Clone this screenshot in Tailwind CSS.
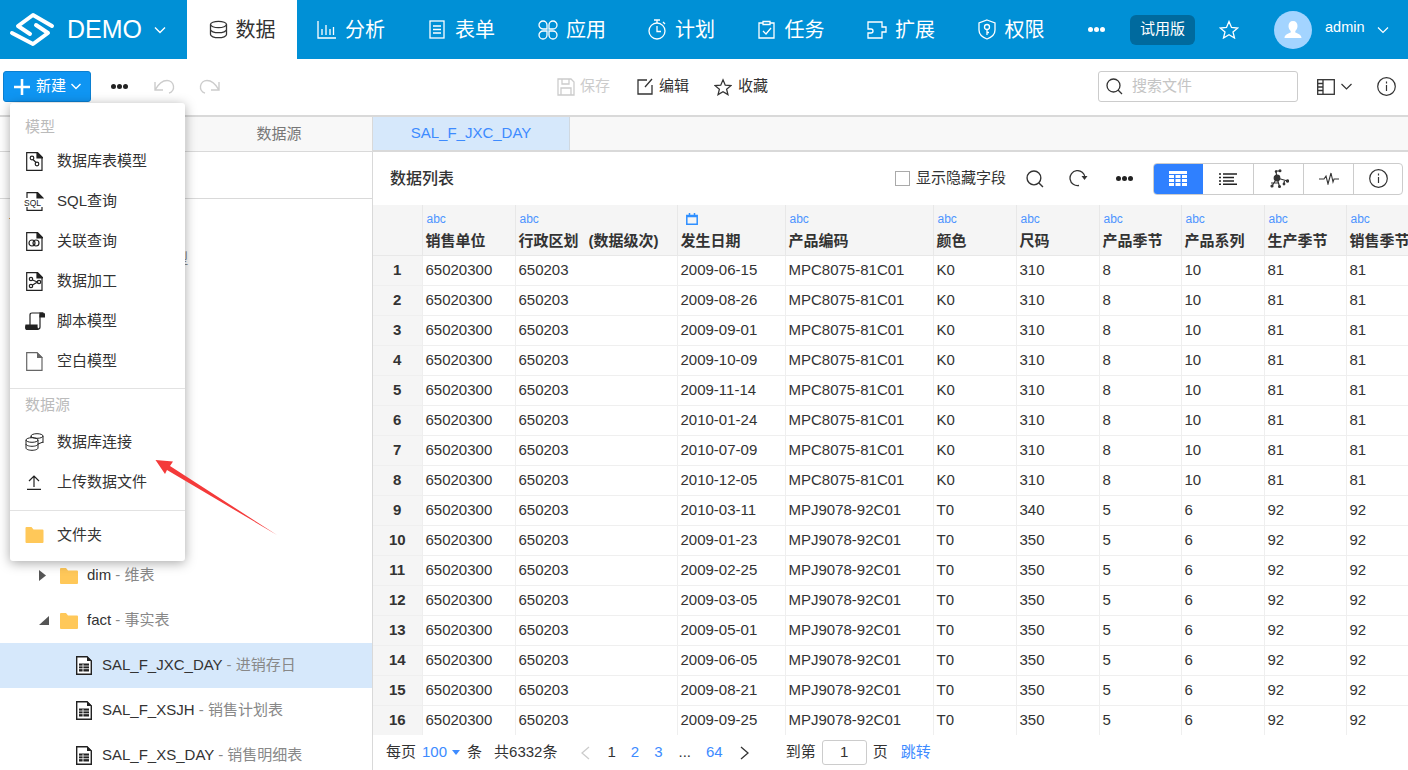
<!DOCTYPE html>
<html lang="zh">
<head>
  <meta charset="UTF-8">
  <title>数据</title>
  <script src="https://cdn.jsdelivr.net/npm/@tailwindcss/browser@4"></script>
</head>
<body class="w-[1408px] h-[770px] overflow-hidden relative bg-white text-[#333] text-[15px] font-['Liberation_Sans','Noto_Sans_CJK_SC',sans-serif]">

  <!-- Top nav -->
  <header class="h-[59px] bg-[#0090d6] flex items-center text-white">
    <div class="w-[187px] h-full flex items-center">
      <svg class="ml-[9px] w-[46px] h-[59px]" viewBox="9 0 46 59" fill="none" stroke="#fff" stroke-width="4" stroke-linejoin="round" stroke-linecap="round">
        <path d="M52 26 33 15 18 26 30 34"/>
        <path d="M12 33 33 44 48 33 36 25"/>
      </svg>
      <span class="ml-[12px] text-[25px]">DEMO</span>
      <svg class="ml-[12px] w-[12px] h-[8px]" viewBox="0 0 12 8" fill="none" stroke="#fff" stroke-width="1.4"><path d="M1 1.500 6 6.500 11 1.500"/></svg>
    </div>
    <a class="w-[110px] h-full bg-white text-[#333] flex items-center justify-center gap-2 text-xl">
      <svg class="w-[19px] h-[19px]" viewBox="0 0 19 19" fill="none" stroke="#333" stroke-width="1.3"><ellipse cx="9.5" cy="4.5" rx="8" ry="3.2"/><path d="M1.5 4.5v10c0 1.8 3.6 3.2 8 3.2s8-1.400 8-3.200v-10M1.500 9.500c0 1.800 3.600 3.200 8 3.200s8-1.400 8-3.200"/></svg>
      数据
    </a>
    <a class="w-[110px] h-full flex items-center justify-center gap-2 text-xl pr-[2px]">
      <svg class="w-[20px] h-[19px]" viewBox="0 0 20 19" fill="none" stroke="#fff" stroke-width="1.300"><path d="M1 1v17h18M5 9v6M9 5v10M13 9v6M16.500 7v8"/></svg>
      分析
    </a>
    <a class="w-[110px] h-full flex items-center justify-center gap-[10px] text-xl">
      <svg class="w-[16px] h-[19px]" viewBox="0 0 16 19" fill="none" stroke="#fff" stroke-width="1.300"><rect x="1" y="1" width="14" height="17"/><path d="M4 6h8M4 9.500h8M4 13h8"/></svg>
      表单
    </a>
    <a class="w-[110px] h-full flex items-center justify-center gap-2 text-xl">
      <svg class="w-[20px] h-[20px]" viewBox="0 0 20 20" fill="none" stroke="#fff" stroke-width="1.300"><path d="M5 9A4 4 0 1 1 9 5V9ZM15 9A4 4 0 1 0 11 5V9ZM5 11A4 4 0 1 0 9 15V11ZM15 11A4 4 0 1 1 11 15V11Z"/></svg>
      应用
    </a>
    <a class="w-[110px] h-full flex items-center justify-center gap-2 text-xl pr-[2px]">
      <svg class="w-[20px] h-[21px]" viewBox="0 0 20 21" fill="none" stroke="#fff" stroke-width="1.300"><circle cx="10" cy="12" r="8"/><path d="M10 7v5.500h4M7 1h6M10 1v3M16 3l2 2"/></svg>
      计划
    </a>
    <a class="w-[110px] h-full flex items-center justify-center gap-[10px] text-xl pr-[2px]">
      <svg class="w-[17px] h-[19px]" viewBox="0 0 17 19" fill="none" stroke="#fff" stroke-width="1.300"><path d="M5 3H1v15h15V3h-4M5 1.500h7v3H5zM5 11l3 3 5-6"/></svg>
      任务
    </a>
    <a class="w-[110px] h-full flex items-center justify-center gap-2 text-xl pr-[2px]">
      <svg class="w-[20px] h-[18px]" viewBox="0 0 20 18" fill="none" stroke="#fff" stroke-width="1.300"><path d="M1 1h14v5h4v5h-4v6H1v-5h3a2 2 0 0 0 0-4H1z"/></svg>
      扩展
    </a>
    <a class="w-[110px] h-full flex items-center justify-center gap-[9px] text-xl pr-[2px]">
      <svg class="w-[18px] h-[21px]" viewBox="0 0 18 21" fill="none" stroke="#fff" stroke-width="1.300"><path d="M9 1 17 4v7c0 4.500-4 7.500-8 9-4-1.500-8-4.500-8-9V4z"/><circle cx="9" cy="8" r="2.500"/><path d="M9 10.500V16M9 13.500h2"/></svg>
      权限
    </a>
    <div class="ml-[21px] flex gap-[1px]">
      <i class="w-[5px] h-[5px] rounded-full bg-white"></i><i class="w-[5px] h-[5px] rounded-full bg-white"></i><i class="w-[5px] h-[5px] rounded-full bg-white"></i>
    </div>
    <span class="ml-[25px] w-[65px] h-[30px] rounded-md bg-[#006a9e] flex items-center justify-center">试用版</span>
    <svg class="ml-[24px] w-[20px] h-[19px]" viewBox="0 0 20 19" fill="none" stroke="#fff" stroke-width="1.300"><path d="M10 1.500 12.500 7.500 18.800 8 14 12 15.500 18 10 14.800 4.500 18 6 12 1.200 8 7.500 7.500Z"/></svg>
    <span class="ml-[35px] w-[38px] h-[38px] rounded-full bg-[#a3d4ff] flex items-center justify-center">
      <svg class="w-[20px] h-[20px]" viewBox="0 0 20 20" fill="#fff"><path d="M10 1c3 0 4.500 2 4.500 5 0 2-1 4-2.200 5v1.500c2 1 6.200 1.800 6.200 5.500h-17c0-3.700 4.200-4.500 6.200-5.500V11C6.500 10 5.500 8 5.500 6c0-3 1.500-5 4.500-5z"/></svg>
    </span>
    <span class="ml-[13px] text-[14.500px] mb-[4px]">admin</span>
    <svg class="ml-[12px] w-[12px] h-[8px]" viewBox="0 0 12 8" fill="none" stroke="#fff" stroke-width="1.200"><path d="M1 1.500 6 6.500 11 1.500"/></svg>
  </header>

  <!-- Toolbar -->
  <div class="h-[58px] border-b-2 border-[#d9d9d9] flex items-center relative pb-[1px]">
    <button class="ml-[3px] w-[88px] h-[31px] rounded-[3px] bg-[#0f95f2] border border-[#0b7fd1] text-white flex items-center">
      <svg class="ml-[10px] w-[16px] h-[16px]" viewBox="0 0 15 15" stroke="#fff" stroke-width="2.400"><path d="M7.500 0v15M0 7.500h15"/></svg>
      <span class="ml-[6px]">新建</span>
      <svg class="ml-[5px] w-[10px] h-[7px]" viewBox="0 0 10 7" fill="none" stroke="#fff" stroke-width="1.400"><path d="M.5 1 5 5.500 9.500 1"/></svg>
    </button>
    <div class="ml-[20px] flex gap-[1px]">
      <i class="w-[5px] h-[5px] rounded-full bg-[#222]"></i><i class="w-[5px] h-[5px] rounded-full bg-[#222]"></i><i class="w-[5px] h-[5px] rounded-full bg-[#222]"></i>
    </div>
    <svg class="ml-[26px] w-[21px] h-[15px]" viewBox="0 0 21 15" fill="none" stroke="#ccc" stroke-width="1.400"><path d="M1 3v8h8M1 11C5 4 9 1.500 13 1.500a6.500 6.500 0 0 1 2 12.700"/></svg>
    <svg class="ml-[24px] w-[21px] h-[15px]" viewBox="0 0 21 15" fill="none" stroke="#ccc" stroke-width="1.400"><path d="M20 3v8h-8M20 11C16 4 12 1.500 8 1.500a6.500 6.500 0 0 0-2 12.700"/></svg>

    <svg class="ml-[337px] w-[18px] h-[18px]" viewBox="0 0 18 18" fill="none" stroke="#ccc" stroke-width="1.300"><path d="M1 1h13l3 3v13H1zM5 1v5h7V1M4 17v-7h10v7"/></svg>
    <span class="ml-[5px] text-[#ccc]">保存</span>
    <svg class="ml-[27px] w-[16px] h-[17px]" viewBox="0 0 16 17" fill="none" stroke="#333" stroke-width="1.300"><path d="M10 2H1v14h14V7M8 9l7-8"/></svg>
    <span class="ml-[6px]">编辑</span>
    <svg class="ml-[25px] w-[18px] h-[18px]" viewBox="0 0 20 19" fill="none" stroke="#333" stroke-width="1.400"><path d="M10 1.500 12.500 7.500 18.800 8 14 12 15.500 18 10 14.800 4.500 18 6 12 1.200 8 7.500 7.500Z"/></svg>
    <span class="ml-[6px]">收藏</span>

    <div class="ml-[330px] w-[200px] h-[31px] rounded-[3px] border border-[#ccc] flex items-center">
      <svg class="ml-[7px] w-[17px] h-[17px]" viewBox="0 0 17 17" fill="none" stroke="#333" stroke-width="1.300"><circle cx="7.500" cy="7.500" r="6.500"/><path d="M12 12l4 4"/></svg>
      <span class="ml-[9px] text-[#c4c4c4]">搜索文件</span>
    </div>
    <svg class="ml-[19px] w-[18px] h-[16px]" viewBox="0 0 18 16" fill="none" stroke="#333" stroke-width="1.300"><rect x=".700" y=".700" width="16.600" height="14.600"/><path d="M6 1v14M1 4.500h5M1 8h5M1 11.500h5"/></svg>
    <svg class="ml-[6px] w-[11px] h-[7px]" viewBox="0 0 11 7" fill="none" stroke="#333" stroke-width="1.200"><path d="M.5 1 5.500 6 10.500 1"/></svg>
    <svg class="ml-[25px] w-[19px] h-[19px]" viewBox="0 0 19 19" fill="none" stroke="#333" stroke-width="1.200"><circle cx="9.500" cy="9.500" r="8.800"/><path d="M9.500 8v6M9.500 4.500v2"/></svg>
  </div>

  <!-- Main -->
  <div class="flex h-[653px]">
    <!-- Left panel -->
    <aside class="w-[373px] shrink-0 border-r border-[#d9d9d9] flex flex-col overflow-hidden">
      <div class="h-[35px] shrink-0 flex border-b border-[#d9d9d9]">
        <div class="w-1/2 bg-white"></div>
        <div class="w-1/2 bg-[#f8f8f8] text-[#777] flex items-center justify-center">数据源</div>
      </div>
      <div class="h-[47px] shrink-0 border-b border-[#d9d9d9]"></div>
      <div class="h-[38px] shrink-0 flex items-center pl-[9px]"><i class="w-[3px] h-px bg-[#e0a050]"></i></div>
      <div class="h-[45px] shrink-0 flex items-center pl-[85px] text-[#888]">示例 - 数据模型</div>
      <div class="h-[271px] shrink-0"></div>
      <div class="h-[45px] shrink-0 flex items-center">
        <svg class="ml-[39px] w-[8px] h-[11px]" viewBox="0 0 8 11" fill="#555"><path d="M0 0 7 5.500 0 11z"/></svg>
        <svg class="ml-[13px] w-[18px] h-[16px]" viewBox="0 0 18 16" fill="#ffc859"><path d="M0 1q0-1 1-1h5l2 2.500h9q1 0 1 1V15q0 1-1 1H1q-1 0-1-1z"/></svg>
        <span class="ml-[9px]">dim <span class="text-[#888]">- 维表</span></span>
      </div>
      <div class="h-[45px] shrink-0 flex items-center">
        <svg class="ml-[39px] w-[10px] h-[9px]" viewBox="0 0 10 9" fill="#555"><path d="M10 0V9H0z"/></svg>
        <svg class="ml-[11px] w-[18px] h-[16px]" viewBox="0 0 18 16" fill="#ffc859"><path d="M0 1q0-1 1-1h5l2 2.500h9q1 0 1 1V15q0 1-1 1H1q-1 0-1-1z"/></svg>
        <span class="ml-[9px]">fact <span class="text-[#888]">- 事实表</span></span>
      </div>
      <div class="h-[45px] shrink-0 flex items-center bg-[#d6e8fb]">
        <svg class="ml-[76px] w-[16px] h-[19px]" viewBox="0 0 16 19"><path d="M.700.700H11L15.300 5V18.300H.700z" fill="#fff" stroke="#222" stroke-width="1.400"/><path d="M11 0 16 5H11z" fill="#222"/><path d="M3 7.500h10v8H3z" fill="#222"/><path d="M3 10h10M3 12.700h10M7 8v8" stroke="#fff" stroke-width=".800"/></svg>
        <span class="ml-[10px]">SAL_F_JXC_DAY <span class="text-[#888]">- 进销存日</span></span>
      </div>
      <div class="h-[45px] shrink-0 flex items-center">
        <svg class="ml-[76px] w-[16px] h-[19px]" viewBox="0 0 16 19"><path d="M.700.700H11L15.300 5V18.300H.700z" fill="#fff" stroke="#222" stroke-width="1.400"/><path d="M11 0 16 5H11z" fill="#222"/><path d="M3 7.500h10v8H3z" fill="#222"/><path d="M3 10h10M3 12.700h10M7 8v8" stroke="#fff" stroke-width=".800"/></svg>
        <span class="ml-[10px]">SAL_F_XSJH <span class="text-[#888]">- 销售计划表</span></span>
      </div>
      <div class="h-[45px] shrink-0 flex items-center">
        <svg class="ml-[76px] w-[16px] h-[19px]" viewBox="0 0 16 19"><path d="M.700.700H11L15.300 5V18.300H.700z" fill="#fff" stroke="#222" stroke-width="1.400"/><path d="M11 0 16 5H11z" fill="#222"/><path d="M3 7.500h10v8H3z" fill="#222"/><path d="M3 10h10M3 12.700h10M7 8v8" stroke="#fff" stroke-width=".800"/></svg>
        <span class="ml-[10px]">SAL_F_XS_DAY <span class="text-[#888]">- 销售明细表</span></span>
      </div>
    </aside>

    <!-- Right panel -->
    <section class="flex-1 min-w-0 flex flex-col">
      <div class="h-[35px] shrink-0 flex bg-[#f8f8f8] border-b-2 border-[#d9d9d9]">
        <div class="w-[197px] bg-[#d6e8fb] border-r border-[#d0d8e0] text-[#3d8bff] flex items-center justify-center">SAL_F_JXC_DAY</div>
      </div>
      <div class="h-[53px] shrink-0 flex items-center whitespace-nowrap">
        <h2 class="ml-[17px] w-[64px] text-base font-medium">数据列表</h2>
        <i class="ml-[441px] w-[15px] h-[15px] border border-[#aaa]"></i>
        <span class="ml-[6px] w-[90px]">显示隐藏字段</span>
        <svg class="ml-[20px] w-[18px] h-[18px]" viewBox="0 0 17 17" fill="none" stroke="#333" stroke-width="1.300"><circle cx="7.500" cy="7.500" r="6.500"/><path d="M12 12l4 4"/></svg>
        <svg class="ml-[25px] w-[19px] h-[17px]" viewBox="0 0 19 17" fill="none" stroke="#333" stroke-width="1.300"><path d="M16 7.500A7.500 7.500 0 1 0 10 15.500M9 .700A7.500 7.500 0 0 1 14 3"/><path d="M12.500 6h6l-3 4z" fill="#333" stroke="none"/></svg>
        <div class="ml-[28px] flex gap-[1px]">
          <i class="w-[5px] h-[5px] rounded-full bg-[#222]"></i><i class="w-[5px] h-[5px] rounded-full bg-[#222]"></i><i class="w-[5px] h-[5px] rounded-full bg-[#222]"></i>
        </div>
        <div class="ml-[20px] w-[250px] h-[32px] flex rounded-[4px] border border-[#ccc] overflow-hidden">
          <div class="w-[50px] -my-px -ml-px bg-[#2f80ff] flex items-center justify-center">
            <svg class="w-[18px] h-[15px]" viewBox="0 0 18 15" fill="#fff"><path d="M0 0h18v3H0zM0 4h5v3H0zM6.500 4h5v3h-5zM13 4h5v3h-5zM0 8h5v3H0zM6.500 8h5v3h-5zM13 8h5v3h-5zM0 12h5v3H0zM6.500 12h5v3h-5zM13 12h5v3h-5z"/></svg>
          </div>
          <div class="w-[51px] border-r border-[#ccc] flex items-center justify-center">
            <svg class="w-[18px] h-[12px]" viewBox="0 0 18 12" stroke="#222"><path d="M4 1h14M4 4.500h11M4 8h11M4 11.200h14" stroke-width="1.500"/><path d="M0 1h2M0 4.500h2M0 8h2M0 11.200h2" stroke-width="1.500"/></svg>
          </div>
          <div class="w-[50px] border-r border-[#ccc] flex items-center justify-center">
            <svg class="w-[20px] h-[19px]" viewBox="0 0 20 19" fill="#333" stroke="#333" stroke-width="1.200"><circle cx="8" cy="9" r="2.800"/><circle cx="11" cy="1.800" r=".900"/><circle cx="7" cy="2.500" r=".700"/><circle cx="3" cy="17" r="1"/><circle cx="10.500" cy="17.500" r=".900"/><circle cx="18.500" cy="12" r="1.100"/><circle cx="15" cy="15" r=".800"/><path d="M8 9 7 2.500M7 2h4M8 9 3 17M8 9 10.500 17.500M2 14h7M8 9 18.500 12M15 15 15.500 11" fill="none"/></svg>
          </div>
          <div class="w-[50px] border-r border-[#ccc] flex items-center justify-center">
            <svg class="w-[20px] h-[13px]" viewBox="0 0 20 13" fill="none" stroke="#333" stroke-width="1.100"><path d="M0 7h5l2-3 2 8 3-11 2 9 1-3h5"/></svg>
          </div>
          <div class="flex-1 flex items-center justify-center">
            <svg class="w-[19px] h-[19px]" viewBox="0 0 19 19" fill="none" stroke="#333" stroke-width="1.200"><circle cx="9.500" cy="9.500" r="8.800"/><path d="M9.500 8v6M9.500 4.500v2"/></svg>
          </div>
        </div>
      </div>

      <!-- Table -->
      <div class="h-[530px] shrink-0 overflow-hidden">
        <table class="table-fixed border-collapse w-[1117px]">
          <colgroup>
            <col class="w-[49px]"><col class="w-[93px]"><col class="w-[162px]"><col class="w-[108px]"><col class="w-[148px]"><col class="w-[83px]"><col class="w-[83px]"><col class="w-[82px]"><col class="w-[83px]"><col class="w-[82px]"><col class="w-[144px]">
          </colgroup>
          <thead id="thead" class="bg-[#f5f5f5]"></thead>
          <tbody id="tbody"></tbody>
        </table>
      </div>

      <!-- Pagination -->
      <div class="h-[35px] shrink-0 flex items-center whitespace-nowrap">
        <span class="ml-[13px]">每页</span>
        <span class="ml-[6px] text-[#3d8bff]">100</span>
        <i class="ml-[5px] w-0 h-0 border-x-[4px] border-x-transparent border-t-[5px] border-t-[#3d8bff]"></i>
        <span class="ml-[7px]">条</span>
        <span class="ml-[12px]">共6332条</span>
        <svg class="ml-[23px] w-[10px] h-[14px]" viewBox="0 0 10 14" fill="none" stroke="#ccc" stroke-width="1.300"><path d="M9 1 2 7l7 6"/></svg>
        <span class="ml-[17px]">1</span>
        <span class="ml-[15px] text-[#3d8bff]">2</span>
        <span class="ml-[15px] text-[#3d8bff]">3</span>
        <span class="ml-[16px]">...</span>
        <span class="ml-[15px] text-[#3d8bff]">64</span>
        <svg class="ml-[17px] w-[10px] h-[14px]" viewBox="0 0 10 14" fill="none" stroke="#333" stroke-width="1.300"><path d="M1 1l7 6-7 6"/></svg>
        <span class="ml-[36px]">到第</span>
        <span class="ml-[6px] w-[45px] h-[25px] rounded-[3px] border border-[#ccc] flex items-center justify-center">1</span>
        <span class="ml-[6px]">页</span>
        <span class="ml-[13px] text-[#3d8bff]">跳转</span>
      </div>
    </section>
  </div>

  <!-- 新建 dropdown -->
  <div class="absolute left-[10px] top-[103px] w-[175px] h-[458px] bg-white rounded-[3px] shadow-[0_2px_12px_rgba(0,0,0,0.35)]">
    <div class="h-[38px] pt-[10px] pl-[15px] text-[#bbb] leading-[28px]">模型</div>
    <div class="h-[40px] flex items-center">
      <svg class="ml-[16px] w-[17px] h-[19px]" viewBox="0 0 17 19" fill="none" stroke="#222" stroke-width="1.200"><path d="M.700.700H11L16 5.500V18.300H.700z"/><path d="M11 0 17 6H11z" fill="#222"/><circle cx="6" cy="6" r="1.800"/><circle cx="11" cy="12" r="1.800"/><path d="M7 7.500 10 10.500"/></svg>
      <span class="ml-[14px]">数据库表模型</span>
    </div>
    <div class="h-[40px] flex items-center">
      <svg class="ml-[14px] w-[20px] h-[19px]" viewBox="0 0 20 19" fill="none" stroke="#222" stroke-width="1.200"><path d="M3 6V.700H13L18 5.500V6M3 15v3.300H18V15"/><path d="M13 0 19 6H13z" fill="#222"/><text x="0" y="14" font-size="8.500" fill="#222" stroke="none" font-family="Liberation Sans">SQL</text></svg>
      <span class="ml-[13px]">SQL查询</span>
    </div>
    <div class="h-[40px] flex items-center">
      <svg class="ml-[16px] w-[17px] h-[19px]" viewBox="0 0 17 19" fill="none" stroke="#222" stroke-width="1.200"><path d="M.700.700H11L16 5.500V18.300H.700z"/><path d="M11 0 17 6H11z" fill="#222"/><circle cx="6" cy="11" r="3"/><circle cx="10" cy="11" r="3"/></svg>
      <span class="ml-[14px]">关联查询</span>
    </div>
    <div class="h-[40px] flex items-center">
      <svg class="ml-[16px] w-[17px] h-[19px]" viewBox="0 0 17 19" fill="none" stroke="#222" stroke-width="1.200"><path d="M.700.700H11L16 5.500V18.300H.700z"/><path d="M11 0 17 6H11z" fill="#222"/><circle cx="5" cy="7" r="1.700"/><circle cx="5" cy="14" r="1.700"/><circle cx="13" cy="10" r="1.700"/><path d="M6.500 8 11.500 10 6.500 13"/></svg>
      <span class="ml-[14px]">数据加工</span>
    </div>
    <div class="h-[40px] flex items-center">
      <svg class="ml-[15px] w-[20px] h-[18px]" viewBox="0 0 20 18" fill="none" stroke="#222" stroke-width="1.200"><path d="M5 13V3q0-2 2-2h11q-3 0-3 3v11q0 2-2 2"/><path d="M1 13h11v2q0 2 1.500 2.500H2q-2 0-1-4.500z" fill="#222"/><path d="M15 1h3q1.500 0 1.500 2v2H15z" fill="#222"/></svg>
      <span class="ml-[12px]">脚本模型</span>
    </div>
    <div class="h-[40px] flex items-center">
      <svg class="ml-[16px] w-[17px] h-[19px]" viewBox="0 0 17 19" fill="none" stroke="#666" stroke-width="1.200"><path d="M.700.700H11L16 5.500V18.300H.700z"/><path d="M11 0 17 6H11z" fill="#666" stroke="none"/></svg>
      <span class="ml-[14px]">空白模型</span>
    </div>
    <div class="mt-[7px] border-t border-[#e2e2e2]"></div>
    <div class="h-[33px] pl-[15px] flex items-center text-[#bbb]">数据源</div>
    <div class="h-[40px] flex items-center">
      <svg class="ml-[15px] w-[19px] h-[18px]" viewBox="0 0 19 18" fill="none" stroke="#222" stroke-width="1"><ellipse cx="12" cy="3" rx="6" ry="2.300"/><path d="M18 3v7M6 3v2"/><ellipse cx="7" cy="7" rx="6" ry="2.300"/><path d="M1 7v8c0 1.300 2.700 2.300 6 2.300s6-1 6-2.300V7M1 11c0 1.300 2.700 2.300 6 2.300s6-1 6-2.300M13 11l5-2"/></svg>
      <span class="ml-[13px]">数据库连接</span>
    </div>
    <div class="h-[40px] flex items-center">
      <svg class="ml-[17px] w-[14px] h-[15px]" viewBox="0 0 14 15" fill="none" stroke="#222" stroke-width="1.200"><path d="M7 12V1M2 6l5-5 5 5M0 14.400h14"/></svg>
      <span class="ml-[16px]">上传数据文件</span>
    </div>
    <div class="mt-[8px] border-t border-[#e2e2e2]"></div>
    <div class="h-[48px] flex items-center">
      <svg class="ml-[15px] w-[19px] h-[16px]" viewBox="0 0 18 16" fill="#ffc859"><path d="M0 1q0-1 1-1h5l2 2.500h9q1 0 1 1V15q0 1-1 1H1q-1 0-1-1z"/></svg>
      <span class="ml-[13px]">文件夹</span>
    </div>
  </div>

  <!-- red annotation arrow -->
  <svg class="absolute left-0 top-0 pointer-events-none" width="1408" height="770" viewBox="0 0 1408 770">
    <path d="M155.500 460 173 461.500 170 466 277 535 167 470 165 474Z" fill="#f43a3a"/>
  </svg>

  <script>
    const dates = ['2009-06-15','2009-08-26','2009-09-01','2009-10-09','2009-11-14','2010-01-24','2010-07-09','2010-12-05','2010-03-11','2009-01-23','2009-02-25','2009-03-05','2009-05-01','2009-06-05','2009-08-21','2009-09-25'];
    const heads = ['销售单位','行政区划<span class="ml-[10px]">(数据级次)</span>','发生日期','产品编码','颜色','尺码','产品季节','产品系列','生产季节','销售季节'];

    document.getElementById('thead').innerHTML = `<tr class="h-[50px]">
      <th class="border-r border-b border-[#e8e8e8]"></th>
      ${heads.map((h, i) => `<th class="border-r border-b border-[#e8e8e8] px-[3px] text-left align-top font-bold whitespace-nowrap overflow-hidden">
        <div class="h-[25px] pt-[6px] pl-[1px] text-xs font-normal text-[#4d94ff]">${i == 2
          ? '<svg class="ml-[4px] mt-[2px] w-[12px] h-[12px]" viewBox="0 0 12 12" fill="none" stroke="#2f8fff" stroke-width="1.500"><path d="M.800 2.500h10.400v8.700H.800zM.800 3.500h10.400M3.500 0v2.500M8.500 0v2.500"/></svg>'
          : 'abc'}</div>
        <div class="leading-[22px]">${h}</div>
      </th>`).join('')}
    </tr>`;

    document.getElementById('tbody').innerHTML = dates.map((d, i) => {
      const a = i < 8;
      const row = ['65020300','650203',d,a ? 'MPC8075-81C01' : 'MPJ9078-92C01',a ? 'K0' : 'T0',a ? '310' : (i == 8 ? '340' : '350'),a ? '8' : '5',a ? '10' : '6',a ? '81' : '92',a ? '81' : '92'];
      return `<tr class="h-[30px]">
        <td class="bg-[#f5f5f5] text-center font-bold border-r border-b border-[#efefef]">${i + 1}</td>
        ${row.map(c => `<td class="border-r border-b border-[#efefef] px-[3px] whitespace-nowrap">${c}</td>`).join('')}
      </tr>`;
    }).join('');
  </script>
</body>
</html>
